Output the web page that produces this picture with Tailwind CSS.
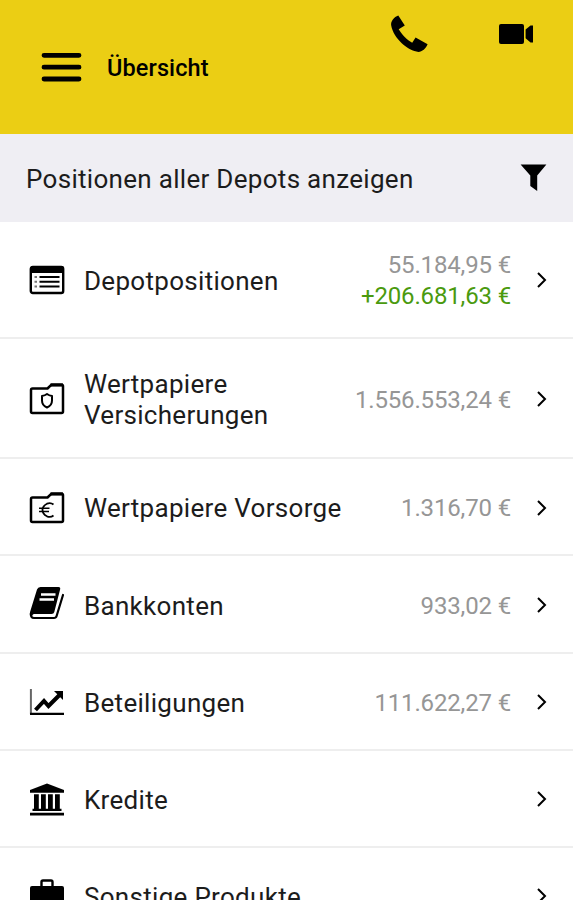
<!DOCTYPE html>
<html lang="de">
<head>
    <meta charset="UTF-8">
    <meta name="viewport" content="width=device-width, initial-scale=1.0">
    <title>Übersicht</title>
    <script src="https://cdn.jsdelivr.net/npm/@tailwindcss/browser@4"></script>
</head>
<body class="bg-white h-screen overflow-hidden font-['Roboto',sans-serif] text-[#1c1c1c]">
    <!-- Header -->
    <header class="h-[134px] bg-[#ebce14] flex items-center pl-[41px] pr-[39px] text-black">
        <button class="shrink-0" aria-label="Menü">
            <svg class="w-[41px] h-8" viewBox="0 0 41 32" fill="none" stroke="currentColor" stroke-width="4.8" stroke-linecap="round">
                <path d="M3 4.300h35M3 16.200h35M3 28h35"/>
            </svg>
        </button>
        <h1 class="ml-[25px] pt-[3px] text-[23.5px] font-medium tracking-[0.1px]">Übersicht</h1>
        <div class="ml-auto self-start flex items-start gap-[70px] pt-[15px]">
            <svg class="w-[38px] h-[38px]" viewBox="0 0 38 38" fill="currentColor">
                <path d="M8.300 .6L14.800 10.600L8.700 14.300C12 20 17 25 22.200 27.800L25.600 22.600L37.600 29.300C36 33.500 32 36.900 28.500 36.900C18 36 3.500 23.500 1.200 10.500C.5 6.500 4 2 8.300 .6Z"/>
            </svg>
            <svg class="w-9 h-[38px]" viewBox="0 0 36 38" fill="currentColor">
                <rect x="1" y="9" width="25" height="20" rx="2"/>
                <path d="M27.600 14.500L32.500 10.500H35V27.500H32.500L27.600 23.300Z"/>
            </svg>
        </div>
    </header>

    <!-- Filter bar -->
    <div class="h-[88px] bg-[#efeef3] flex items-center justify-between pl-[26px] pr-[26px]">
        <span class="pt-0.5 text-[26px] tracking-[0.3px]">Positionen aller Depots anzeigen</span>
        <svg class="w-[27px] h-7 text-black" viewBox="0 0 27 28" fill="currentColor">
            <path d="M.6 .5H26.400L17.200 11.500V27L10.300 22V11.500Z"/>
        </svg>
    </div>

    <!-- Positions -->
    <ul class="text-[26px] leading-[31px] tracking-[0.3px]">
        <li class="h-[117px] border-b-2 border-[#eeeeee] flex items-center pl-[29px] pr-[25px]">
            <svg class="w-9 h-9 shrink-0 text-black" viewBox="0 0 36 36" fill="none" stroke="currentColor">
                <rect x="1.800" y="5" width="32.400" height="26" rx="2" stroke-width="2.400"/>
                <path d="M1 10V6.500Q1 4 3.500 4H32.500Q35 4 35 6.500V11H1Z" fill="currentColor" stroke="none"/>
                <path d="M10.500 15h20M10.500 19.700h20M10.500 24.500h20" stroke-width="1.900"/>
                <path d="M5.500 15h2.500M5.500 19.700h2.500M5.500 24.500h2.500" stroke="#777777" stroke-width="1.900"/>
            </svg>
            <span class="ml-[19px] pt-[3px]">Depotpositionen</span>
            <div class="ml-auto pt-[3px] text-right text-2xl leading-[31px] tracking-[-0.15px]">
                <div class="text-[#969696]">55.184,95 €</div>
                <div class="text-[#4a9a0e]">+206.681,63 €</div>
            </div>
            <svg class="w-3 h-[18px] ml-[25px] mt-px shrink-0 text-black" viewBox="0 0 12 18" fill="none" stroke="currentColor" stroke-width="2"><path d="M2 2L9 9L2 16"/></svg>
        </li>
        <li class="h-[120px] border-b-2 border-[#eeeeee] flex items-center pl-[29px] pr-[25px]">
            <svg class="w-9 h-9 mt-0.5 shrink-0 text-black" viewBox="0 0 36 36" fill="none" stroke="currentColor" stroke-linejoin="round">
                <path d="M2 9Q2 7.500 3.500 7.500H18.500L22.500 3.700H32.500Q34 3.700 34 5.200V30.500Q34 32 32.500 32H3.500Q2 32 2 30.500Z" stroke-width="2.500"/>
                <path d="M21.500 4H34" stroke-width="3.200"/>
                <path d="M18 13Q20 14.500 23 15V19.500Q23 24.500 18 26.500Q13 24.500 13 19.500V15Q16 14.500 18 13Z" stroke-width="2"/>
            </svg>
            <span class="ml-[19px] pt-[3px]">Wertpapiere<br>Versicherungen</span>
            <div class="ml-auto pt-1 text-right text-2xl leading-[31px] tracking-[-0.15px] text-[#969696]">1.556.553,24 €</div>
            <svg class="w-3 h-[18px] ml-[25px] mt-0.5 shrink-0 text-black" viewBox="0 0 12 18" fill="none" stroke="currentColor" stroke-width="2"><path d="M2 2L9 9L2 16"/></svg>
        </li>
        <li class="h-[97px] border-b-2 border-[#eeeeee] flex items-center pl-[29px] pr-[25px]">
            <svg class="w-9 h-9 mt-0.5 shrink-0 text-black" viewBox="0 0 36 36" fill="none" stroke="currentColor" stroke-linejoin="round">
                <path d="M2 9Q2 7.500 3.500 7.500H18.500L22.500 3.700H32.500Q34 3.700 34 5.200V30.500Q34 32 32.500 32H3.500Q2 32 2 30.500Z" stroke-width="2.500"/>
                <path d="M21.500 4H34" stroke-width="3.200"/>
                <path d="M24.500 14.500Q21.500 12.200 18 13.700Q13.500 16 13.500 20T18 26.300Q21.500 27.800 24.500 25.500" stroke-width="1.800"/>
                <path d="M10 18.300H20.500M10 21.500H20" stroke-width="1.500"/>
            </svg>
            <span class="ml-[19px] pt-1">Wertpapiere Vorsorge</span>
            <div class="ml-auto pt-1 text-right text-2xl leading-[31px] tracking-[-0.15px] text-[#969696]">1.316,70 €</div>
            <svg class="w-3 h-[18px] ml-[25px] mt-0.5 shrink-0 text-black" viewBox="0 0 12 18" fill="none" stroke="currentColor" stroke-width="2"><path d="M2 2L9 9L2 16"/></svg>
        </li>
        <li class="h-[98px] border-b-2 border-[#eeeeee] flex items-center pl-[29px] pr-[25px]">
            <svg class="w-9 h-9 mt-0.5 shrink-0 text-black" viewBox="0 0 36 36" fill="none" stroke="currentColor" stroke-linejoin="round" stroke-linecap="round">
                <path d="M11.500 0H29.500Q31.800 0 31.100 2.500L25.300 25Q24.800 27 22.500 27H5Q3.500 27 3.500 28.500H1Q.5 26.500 1.200 24.500L8 2.500Q8.800 0 11.500 0Z" fill="currentColor" stroke="none"/>
                <path d="M12 7.500H26.500M10.500 12.500H25" stroke="white" stroke-width="2.400" stroke-linecap="butt"/>
                <path d="M2 26.500Q1.500 31 5 31H25Q27 31 27.600 29L34 8" stroke-width="2.200"/>
            </svg>
            <span class="ml-[19px] pt-1">Bankkonten</span>
            <div class="ml-auto pt-1 text-right text-2xl leading-[31px] tracking-[-0.15px] text-[#969696]">933,02 €</div>
            <svg class="w-3 h-[18px] ml-[25px] mt-0.5 shrink-0 text-black" viewBox="0 0 12 18" fill="none" stroke="currentColor" stroke-width="2"><path d="M2 2L9 9L2 16"/></svg>
        </li>
        <li class="h-[97px] border-b-2 border-[#eeeeee] flex items-center pl-[29px] pr-[25px]">
            <svg class="w-9 h-9 shrink-0 text-black" viewBox="0 0 36 36" fill="none" stroke="currentColor">
                <path d="M1.900 5V30" stroke="#666666" stroke-width="2"/>
                <path d="M1 29.800H35" stroke-width="2.200"/>
                <path d="M6.500 26L15 17L19.500 22L31 10.500" stroke-width="4"/>
                <path d="M25 7H34V16Z" fill="currentColor" stroke="none"/>
            </svg>
            <span class="ml-[19px] pt-[3px]">Beteiligungen</span>
            <div class="ml-auto pt-1 text-right text-2xl leading-[31px] tracking-[-0.15px] text-[#969696]">111.622,27 €</div>
            <svg class="w-3 h-[18px] ml-[25px] mt-px shrink-0 text-black" viewBox="0 0 12 18" fill="none" stroke="currentColor" stroke-width="2"><path d="M2 2L9 9L2 16"/></svg>
        </li>
        <li class="h-[97px] border-b-2 border-[#eeeeee] flex items-center pl-[29px] pr-[25px]">
            <svg class="w-9 h-9 mt-0.5 shrink-0 text-black" viewBox="0 0 36 36" fill="currentColor">
                <path d="M18 1.500L35 8V10.800H1V8Z"/>
                <path d="M5 12.300h4.800v15h-4.800zM12 12.300h4.800v15h-4.800zM19 12.300h4.800v15h-4.800zM26 12.300h4.800v15h-4.800z"/>
                <path d="M3.500 26.800h29v2.200h-29zM1 30.700h34v2.700h-34z"/>
            </svg>
            <span class="ml-[19px] pt-[3px]">Kredite</span>
            <svg class="w-3 h-[18px] ml-auto mt-px shrink-0 text-black" viewBox="0 0 12 18" fill="none" stroke="currentColor" stroke-width="2"><path d="M2 2L9 9L2 16"/></svg>
        </li>
        <li class="h-[97px] border-b-2 border-[#eeeeee] flex items-center pl-[29px] pr-[25px]">
            <svg class="w-9 h-9 mt-0.5 shrink-0 text-black" viewBox="0 0 36 36" fill="currentColor">
                <path d="M12.500 8V3Q12.500 1.500 14 1.500H22Q23.500 1.500 23.500 3V8" fill="none" stroke="currentColor" stroke-width="2.400"/>
                <rect x="1" y="7" width="34" height="27" rx="2"/>
            </svg>
            <span class="ml-[19px] pt-[3px]">Sonstige Produkte</span>
            <svg class="w-3 h-[18px] ml-auto mt-px shrink-0 text-black" viewBox="0 0 12 18" fill="none" stroke="currentColor" stroke-width="2"><path d="M2 2L9 9L2 16"/></svg>
        </li>
    </ul>
</body>
</html>
